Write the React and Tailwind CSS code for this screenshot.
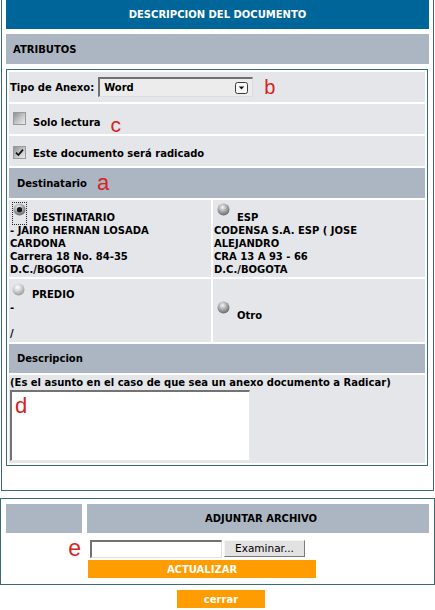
import React from "react";

function Radio({ checked = false, light = false, id }) {
  return (
    <svg width="13" height="13" viewBox="0 0 13 13" className="block">
      <defs>
        <radialGradient id={id} cx="42%" cy="32%" r="68%">
          <stop offset="0" stopColor={light ? "#ffffff" : "#f4f4f4"} />
          <stop offset="0.45" stopColor={light ? "#d6d6d6" : "#b4b4b4"} />
          <stop offset="1" stopColor={light ? "#9c9c9c" : "#6a6a6a"} />
        </radialGradient>
      </defs>
      <circle cx="6.5" cy="6.5" r="6" fill={`url(#${id})`} />
      {checked && <circle cx="6.5" cy="6.7" r="2.6" fill="#151515" />}
    </svg>
  );
}

function Checkbox({ checked = false, id }) {
  return (
    <svg width="13" height="13" viewBox="0 0 13 13" className="block">
      <defs>
        <linearGradient id={id} x1="0" y1="0" x2="1" y2="1">
          <stop offset="0" stopColor="#8c8c8c" />
          <stop offset="0.55" stopColor="#c8c8c8" />
          <stop offset="1" stopColor="#efefef" />
        </linearGradient>
      </defs>
      <rect x="0.5" y="0.5" width="12" height="12" fill={`url(#${id})`} stroke="#9a9a9a" />
      {checked && (
        <path d="M3 6.6 L5.4 9 L10 3.6" fill="none" stroke="#111" strokeWidth="1.7" />
      )}
    </svg>
  );
}

function DropBtn() {
  return (
    <svg width="13" height="12" viewBox="0 0 13 12" className="block">
      <rect x="0.5" y="0.5" width="12" height="11" rx="2" fill="#f6f6f6" stroke="#3a3a3a" />
      <path d="M3.8 4.5 L9.2 4.5 L6.5 7.6 Z" fill="#111" />
    </svg>
  );
}

const red = "font-['Liberation_Sans',Arial,sans-serif] font-normal text-[#d42424] leading-none";

export default function App() {
  return (
    <div className="w-[435px] h-[610px] overflow-hidden bg-white font-['DejaVu_Sans',sans-serif] text-[10px] font-bold text-black leading-[13px]">
      {/* Main box */}
      <div className="ml-[1px] w-[433px] border-x border-b border-[#3b6b70] px-[4px] pb-[24px]">
        <div className="h-[29px] bg-[#006699] text-white flex items-center justify-center">
          DESCRIPCION DEL DOCUMENTO
        </div>
        <div className="mt-[5px] h-[30px] bg-[#acb6c2] flex items-center pl-[7px]">ATRIBUTOS</div>

        <div className="mt-[5px] w-[422px] border border-[#3b6b70] p-[2px] flex flex-col gap-[2px]">
          {/* Tipo de anexo */}
          <div className="h-[30px] bg-[#e4e6ea] flex items-center pl-[1px]">
            <span>Tipo de Anexo:</span>
            <div className="ml-[4px] w-[155px] h-[20px] border-t-2 border-l-2 border-[#707070] border-r border-b border-r-[#dcdcdc] border-b-[#dcdcdc] bg-[#ececec] flex items-center justify-between pl-[4px] pr-[4px]">
              <span>Word</span>
              <DropBtn />
            </div>
            <span className={`${red} ml-[11px] text-[20px]`}>b</span>
          </div>

          {/* Solo lectura */}
          <div className="h-[30px] bg-[#e4e6ea] flex items-start pl-[4px]">
            <div className="mt-[8px]">
              <Checkbox id="cb1" />
            </div>
            <span className="ml-[7px] mt-[12px]">Solo lectura</span>
            <span className={`${red} ml-[10px] mt-[10px] text-[21px]`}>c</span>
          </div>

          {/* Radicado */}
          <div className="h-[30px] bg-[#e4e6ea] flex items-start pl-[4px]">
            <div className="mt-[10px]">
              <Checkbox id="cb2" checked />
            </div>
            <span className="ml-[7px] mt-[11px]">Este documento será radicado</span>
          </div>

          {/* Destinatario */}
          <div className="h-[30px] bg-[#acb6c2] flex items-center pl-[8px]">
            <span>Destinatario</span>
            <span className={`${red} ml-[10px] text-[22px] -mt-[1px]`}>a</span>
          </div>

          {/* Row destinatarios */}
          <div className="grid grid-cols-[202px_1fr] gap-[2px]">
            <div className="h-[77px] bg-[#e4e6ea] pt-[1px] pl-[1px]">
              <div className="flex">
                <span className="mt-[2px] ml-[3px] outline-1 outline-dotted outline-[#222]">
                  <Radio id="r1" checked />
                </span>
                <span className="ml-[7px] mt-[10px]">DESTINATARIO</span>
              </div>
              <div>- JAIRO HERNAN LOSADA</div>
              <div>CARDONA</div>
              <div>Carrera 18 No. 84-35</div>
              <div>D.C./BOGOTA</div>
            </div>
            <div className="h-[77px] bg-[#e4e6ea] pt-[1px] pl-[1px]">
              <div className="flex">
                <span className="mt-[2px] ml-[3px]">
                  <Radio id="r2" />
                </span>
                <span className="ml-[7px] mt-[10px]">ESP</span>
              </div>
              <div>CODENSA S.A. ESP ( JOSE</div>
              <div>ALEJANDRO</div>
              <div>CRA 13 A 93 - 66</div>
              <div>D.C./BOGOTA</div>
            </div>
          </div>

          {/* Row predio / otro */}
          <div className="grid grid-cols-[202px_1fr] gap-[2px]">
            <div className="h-[63px] bg-[#e4e6ea] pt-[1px] pl-[1px]">
              <div className="flex">
                <span className="mt-[3px] ml-[2px]">
                  <Radio id="r3" light />
                </span>
                <span className="ml-[7px] mt-[8px]">PREDIO</span>
              </div>
              <div>-</div>
              <div className="h-[13px]"></div>
              <div>/</div>
            </div>
            <div className="h-[63px] bg-[#e4e6ea] pl-[1px] flex items-center">
              <div className="flex -mt-[1px]">
                <span className="mt-[2px] ml-[3px]">
                  <Radio id="r4" />
                </span>
                <span className="ml-[7px] mt-[10px]">Otro</span>
              </div>
            </div>
          </div>

          {/* Descripcion */}
          <div className="h-[29px] bg-[#acb6c2] flex items-center pl-[8px]">Descripcion</div>

          <div className="h-[88px] bg-[#e4e6ea] pt-[1px] pl-[1px]">
            <div>(Es el asunto en el caso de que sea un anexo documento a Radicar)</div>
            <div className="mt-[1px] w-[240px] h-[71px] bg-white border-t-2 border-l-2 border-[#737373] border-r border-b border-r-[#e8e8e8] border-b-[#e8e8e8] pl-[3px] pt-[3px]">
              <span className={`${red} text-[22px]`}>d</span>
            </div>
          </div>
        </div>
      </div>

      {/* Adjuntar box */}
      <div className="mt-[7px] w-[435px] border border-[#3b6b70] p-[5px] pb-[6px]">
        <div className="grid grid-cols-[76px_1fr] gap-x-[5px]">
          <div className="h-[29px] bg-[#acb6c2]"></div>
          <div className="h-[29px] bg-[#acb6c2] flex items-center justify-center pl-[6px]">ADJUNTAR ARCHIVO</div>
          <div className="flex justify-end pt-[4px] pr-[1px]">
            <span className={`${red} text-[23px]`}>e</span>
          </div>
          <div className="pt-[7px]">
            <div className="flex ml-[3px] h-[18px]">
              <div className="w-[132px] h-[18px] bg-white border-t-2 border-l-2 border-[#737373] border-r border-b border-r-[#e0e0e0] border-b-[#e0e0e0]"></div>
              <div className="ml-[2px] w-[81px] h-[17px] bg-[#e2e2e2] border border-[#f4f4f4] border-r-[#7a7a7a] border-b-[#7a7a7a] flex items-center justify-center font-normal text-[10.5px]">
                Examinar...
              </div>
            </div>
            <div className="ml-[1px] mt-[2px] w-[228px] h-[18px] bg-[#ff9c00] text-white flex items-center justify-center">
              ACTUALIZAR
            </div>
          </div>
        </div>
      </div>

      <div className="mt-[5px] ml-[177px] w-[88px] h-[18px] bg-[#ff9c00] text-white flex items-center justify-center">
        cerrar
      </div>
    </div>
  );
}
